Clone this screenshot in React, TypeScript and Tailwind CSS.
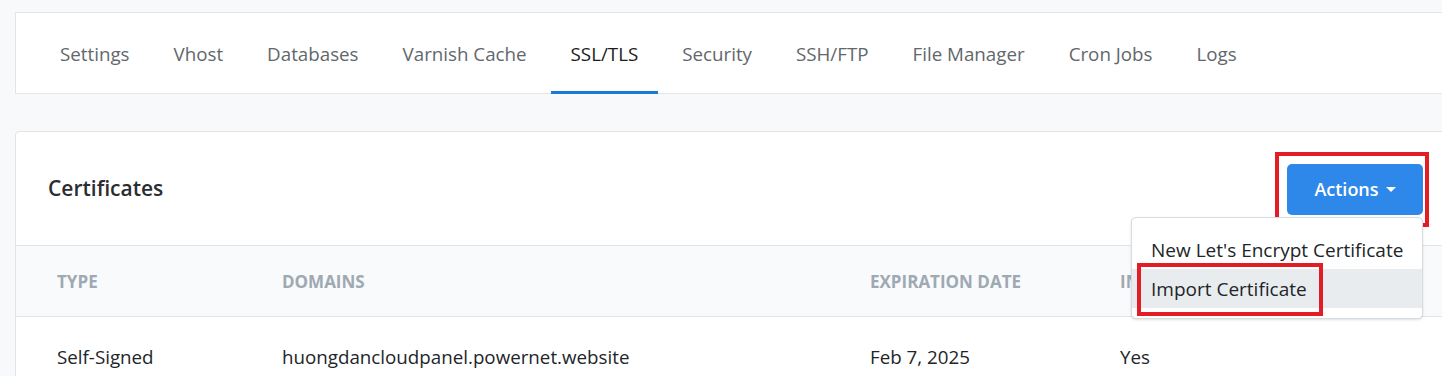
import React from 'react';

const tabs = ['Settings', 'Vhost', 'Databases', 'Varnish Cache', 'SSL/TLS', 'Security', 'SSH/FTP', 'File Manager', 'Cron Jobs', 'Logs'];

const App = () => {
    return (
        <div className="w-full min-h-screen overflow-hidden bg-[#f8f9fb] font-['Open_Sans',sans-serif]">
            <div className="w-[1472px] px-[15px] pt-[12px]">
                {/* tab bar */}
                <nav className="flex h-[82px] bg-white border border-[#e2e4e7] pl-[24px]">
                    {tabs.map((t) => (
                        <a
                            key={t}
                            href="#"
                            className={
                                t === 'SSL/TLS'
                                    ? 'flex items-center px-5 mr-1 -mb-px text-[18.75px] text-[#1b1b1b] border-b-[3px] border-[#1a7bd2]'
                                    : 'flex items-center px-5 mr-1 -mb-px text-[18.75px] text-[#62676c] border-b-[3px] border-transparent'
                            }
                        >
                            <span className="pt-[5px]">{t}</span>
                        </a>
                    ))}
                </nav>

                {/* certificates card */}
                <div className="mt-[37px] bg-white border border-[#e2e4e7] rounded-[4px]">
                    <div className="relative flex items-center justify-between h-[114px] pl-[32px] pr-[33px] border-b border-[#e2e4e7]">
                        <h2 className="text-[21px] font-semibold text-[#2b2d31]">Certificates</h2>

                        <div className="relative">
                            <button className="flex items-center justify-center gap-[7px] w-[136px] h-[51px] rounded-[5px] bg-[#2e88e9] text-white text-[18px] font-semibold mt-[2px]">
                                Actions
                                <span className="w-0 h-0 border-l-[5px] border-r-[5px] border-t-[5px] border-l-transparent border-r-transparent border-t-white"></span>
                            </button>
                            <div className="absolute -left-[12px] -top-[10px] w-[154px] h-[75px] border-[4px] border-[#e31d25] pointer-events-none"></div>

                            {/* dropdown */}
                            <div className="absolute right-0 top-[55px] z-10 w-[292px] pt-[12px] pb-[10px] bg-white border border-[#d9dcdf] rounded-[5px] shadow-sm">
                                <div className="h-[39px] flex items-center pl-[19px] pt-[1px] text-[19px] text-[#212529]">New Let's Encrypt Certificate</div>
                                <div className="relative h-[39px] flex items-center pl-[19px] pt-[2px] text-[19px] text-[#212529] bg-[#e9ecef]">
                                    Import Certificate
                                    <div className="absolute left-[5px] -top-[6px] w-[186px] h-[53px] border-[4px] border-[#e31d25] pointer-events-none"></div>
                                </div>
                            </div>
                        </div>
                    </div>

                    <div className="grid grid-cols-[225px_588px_250px_1fr] h-[71px] items-center bg-[#f9fafb] border-b border-[#e2e4e7] pl-[41px] pt-[2px] text-[17px] font-bold uppercase text-[#9ea9b3]">
                        <div>Type</div>
                        <div>Domains</div>
                        <div>Expiration Date</div>
                        <div>Installed</div>
                    </div>

                    <div className="grid grid-cols-[225px_588px_250px_1fr] h-[80px] items-center pl-[41px] text-[18.75px] text-[#212529]">
                        <div>Self-Signed</div>
                        <div>huongdancloudpanel.powernet.website</div>
                        <div>Feb 7, 2025</div>
                        <div>Yes</div>
                    </div>
                </div>
            </div>
        </div>
    );
};

export default App;
